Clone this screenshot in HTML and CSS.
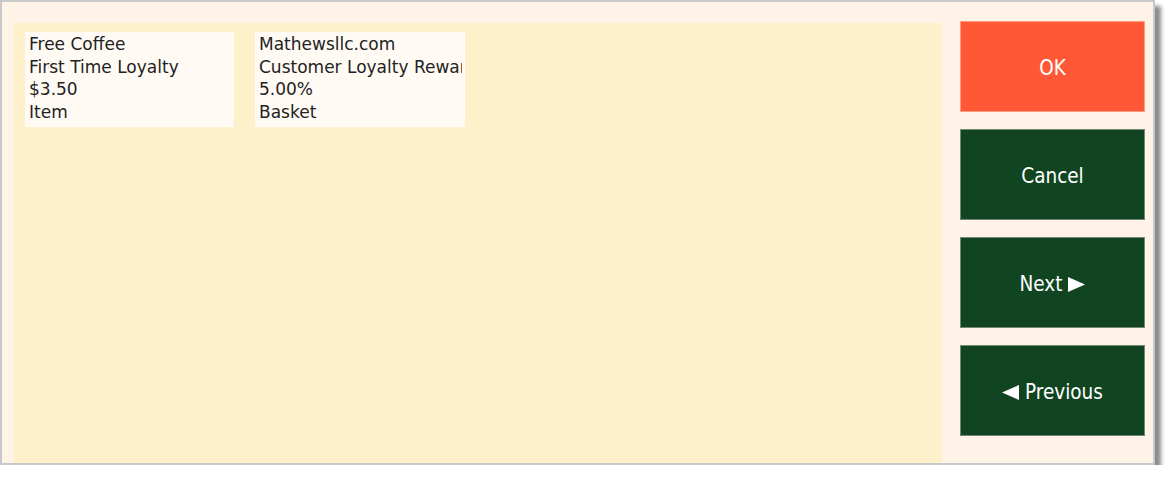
FILE: index.html
```html
<!DOCTYPE html>
<html>
<head>
<meta charset="utf-8">
<link rel="stylesheet" href="styles.css">
</head>
<body>
<div class="window">
  <div class="panel">
    <div class="card">
      <div class="card-text">
        <div>Free Coffee</div>
        <div>First Time Loyalty</div>
        <div>$3.50</div>
        <div>Item</div>
      </div>
    </div>
    <div class="card wide">
      <div class="card-text">
        <div>Mathewsllc.com</div>
        <div>Customer Loyalty Rewards</div>
        <div>5.00%</div>
        <div>Basket</div>
      </div>
    </div>
  </div>
  <div class="actions">
    <button class="btn btn-ok">OK</button>
    <button class="btn btn-green">Cancel</button>
    <button class="btn btn-green"><span>Next</span><svg class="tri" width="17" height="15" viewBox="0 0 17 15"><polygon points="0,0 17,7.5 0,15" fill="#ffffff"/></svg></button>
    <button class="btn btn-green"><svg class="tri" width="17" height="15" viewBox="0 0 17 15"><polygon points="17,0 0,7.5 17,15" fill="#ffffff"/></svg><span>Previous</span></button>
  </div>
</div>
</body>
</html>
```
FILE: styles.css
```css
html, body {
  margin: 0;
  padding: 0;
  background: #ffffff;
}
body {
  font-family: "DejaVu Sans", sans-serif;
}
.window {
  box-sizing: border-box;
  width: 1155px;
  height: 465px;
  border: 2px solid #c8c8cb;
  background: #fff2e6;
  box-shadow: 6px 6px 4px rgba(0, 0, 0, 0.45);
  display: flex;
  padding: 19px 7px 0 12px;
  gap: 18px;
}
.panel {
  flex: 0 0 928px;
  margin-top: 2px;
  background: #fff0cc;
  display: flex;
  align-items: flex-start;
  gap: 21px;
  padding: 9px 0 0 11px;
  box-sizing: border-box;
}
.card {
  box-sizing: border-box;
  width: 209px;
  height: 95px;
  background: #fffaf4;
  padding: 1px 3px 0 4px;
}
.card.wide {
  width: 210px;
}
.card-text {
  overflow: hidden;
  white-space: nowrap;
  font-family: "DejaVu Sans", sans-serif;
  font-size: 17px;
  line-height: 22.6px;
  color: #222222;
}
.actions {
  flex: 0 0 185px;
  display: flex;
  flex-direction: column;
  gap: 17px;
}
.btn {
  box-sizing: border-box;
  height: 91px;
  width: 185px;
  border: 1px solid #6f8a70;
  color: #ffffff;
  font-family: "DejaVu Sans Condensed", "DejaVu Sans", sans-serif;
  font-size: 20.5px;
  padding: 3px 0 0 0;
  margin: 0;
  display: flex;
  align-items: center;
  justify-content: center;
  gap: 6px;
}
.tri {
  display: block;
}
.btn-ok {
  background: #ff5837;
  border-color: #ff9c80;
}
.btn-green {
  background: #114522;
}
```
